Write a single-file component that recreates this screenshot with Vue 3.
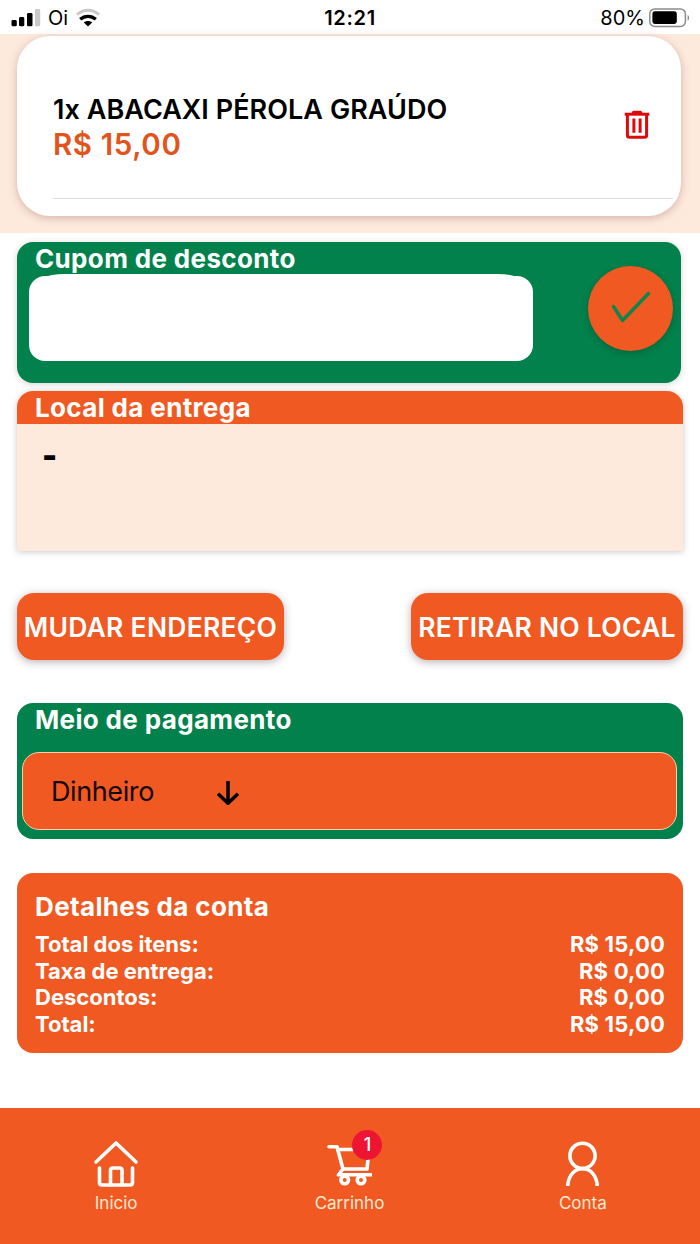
<template>
  <div class="app">
    <header class="status">
      <div class="status__side">
        <svg class="status__signal" viewBox="0 0 30 20" width="30" height="20">
          <rect x="0.5" y="12" width="5.3" height="6.3" rx="1.4" fill="#000" />
          <rect x="8" y="9" width="5.3" height="9.3" rx="1.4" fill="#000" />
          <rect x="16" y="5" width="5.5" height="13.3" rx="1.4" fill="#000" />
          <rect x="23.9" y="1" width="5.3" height="17.3" rx="1.4" fill="#c9c9c9" />
        </svg>
        <span class="status__carrier">Oi</span>
        <svg class="status__wifi" viewBox="0 0 26 20" width="26" height="20">
          <path d="M2 6.7C8.5 0.8 17.5 0.8 24 6.7" fill="none" stroke="#c9c9c9" stroke-width="3" />
          <path d="M5.2 11.3C9.7 7.4 16.3 7.4 20.8 11.3" fill="none" stroke="#000" stroke-width="3.4" />
          <path d="M13 18.4L8.8 14.6C11.2 12.6 14.8 12.6 17.2 14.6Z" fill="#000" />
        </svg>
      </div>
      <span class="status__time">12:21</span>
      <div class="status__side status__side--right">
        <span class="status__percent">80%</span>
        <svg viewBox="0 0 42 20" width="42" height="20">
          <rect x="0.8" y="0.9" width="35.6" height="17.6" rx="5" fill="#fff" stroke="#8c8c8c" stroke-width="1.5" />
          <rect x="3.4" y="3.3" width="24.4" height="12.6" rx="2.4" fill="#000" />
          <path d="M38.6 7c2 .6 2 5 0 5.6z" fill="#8c8c8c" />
        </svg>
      </div>
    </header>

    <section class="cart">
      <div class="cart__card">
        <div v-for="item in items" :key="item.name" class="cart__item">
          <div class="cart__info">
            <span class="cart__name">{{ item.qty }}x {{ item.name }}</span>
            <span class="cart__price">{{ money(item.price) }}</span>
          </div>
          <button class="cart__delete" title="Remover">
            <svg viewBox="0 0 26 30" width="26" height="30" fill="none" stroke="#dc0a0a">
              <path d="M0.7 4.2H25.3" stroke-width="3" />
              <path d="M8.5 3.6L9.5 1.9H16.5L17.5 3.6" stroke-width="2.4" />
              <path d="M3.4 4.5V25.2Q3.4 27.2 5.4 27.2H20.6Q22.6 27.2 22.6 25.2V4.5" stroke-width="3" />
              <path d="M9.9 8.500V22.800M16.100 8.500V22.800" stroke-width="3" />
            </svg>
          </button>
        </div>
      </div>
    </section>

    <section class="coupon">
      <div class="coupon__main">
        <h2 class="title">Cupom de desconto</h2>
        <div class="coupon__field">
          <input v-model="coupon" class="coupon__input" type="text" />
        </div>
      </div>
      <button class="coupon__apply" title="Aplicar">
        <svg viewBox="0 0 40 34" width="40" height="34">
          <path d="M2.5 16.5L11.5 30.5L37.5 3.5" fill="none" stroke="#14834a" stroke-width="3.5" stroke-linecap="round" stroke-linejoin="round" />
        </svg>
      </button>
    </section>

    <section class="address">
      <h2 class="title address__title">Local da entrega</h2>
      <div class="address__body">-</div>
    </section>

    <div class="actions">
      <button class="actions__btn">MUDAR ENDEREÇO</button>
      <button class="actions__btn actions__btn--pickup">RETIRAR NO LOCAL</button>
    </div>

    <section class="payment">
      <h2 class="title payment__title">Meio de pagamento</h2>
      <div class="payment__select">
        <span class="payment__value">Dinheiro</span>
        <svg viewBox="0 0 26 28" width="26" height="28">
          <path d="M13 4V26M3 16.8L13 26.3L23 16.8" fill="none" stroke="#000" stroke-width="3.5" />
        </svg>
      </div>
    </section>

    <section class="bill">
      <h2 class="title bill__title">Detalhes da conta</h2>
      <div v-for="row in bill" :key="row.label" class="bill__row">
        <span>{{ row.label }}</span>
        <span class="bill__value">{{ money(row.value) }}</span>
      </div>
    </section>

    <nav class="tabs">
      <a class="tabs__item">
        <svg class="tabs__icon" viewBox="0 0 46 48" width="46" height="48">
          <path d="M3 22L23 3L43 22" />
          <path d="M6.5 28V42.5Q6.5 45 9 45H37Q39.5 45 39.5 42.5V28" />
          <path d="M17.5 45V30.5Q17.5 28 20 28H26.5Q29 28 29 30.5V45" />
        </svg>
        <span class="tabs__label">Inicio</span>
      </a>
      <a class="tabs__item">
        <div class="tabs__cart">
          <svg class="tabs__icon" viewBox="0 0 46 48" width="46" height="48">
            <path d="M3 6.8H11L17 29H41L43 9.500H12" />
            <path d="M17 29L12.500 34.800H45" />
            <circle cx="18.700" cy="40" r="3.800" />
            <circle cx="35" cy="40" r="3.800" />
          </svg>
          <span class="tabs__badge">{{ items.length }}</span>
        </div>
        <span class="tabs__label">Carrinho</span>
      </a>
      <a class="tabs__item">
        <svg class="tabs__icon tabs__icon--user" viewBox="0 0 46 48" width="46" height="48">
          <circle cx="22.500" cy="15.800" r="12.600" />
          <path d="M7.700 46C8.300 36 14 28.800 22.500 28.800S36.700 36 37.300 46" />
        </svg>
        <span class="tabs__label">Conta</span>
      </a>
    </nav>
  </div>
</template>

<script setup>
import { ref } from 'vue'

const coupon = ref('')

const items = ref([{ qty: 1, name: 'ABACAXI PÉROLA GRAÚDO', price: 15 }])

const bill = [
  { label: 'Total dos itens:', value: 15 },
  { label: 'Taxa de entrega:', value: 0 },
  { label: 'Descontos:', value: 0 },
  { label: 'Total:', value: 15 },
]

function money(value) {
  return 'R$ ' + value.toFixed(2).replace('.', ',')
}
</script>

<style>
body {
  margin: 0;
  background: #fff;
}
</style>

<style scoped>
.app {
  display: flex;
  flex-direction: column;
  width: 700px;
  height: 1244px;
  overflow: hidden;
  background: #fff;
  font-family: Inter, "Liberation Sans", sans-serif;
}

.app * {
  box-sizing: border-box;
}

button {
  border: none;
  padding: 0;
  font-family: inherit;
}

.title {
  margin: 0;
  padding-left: 18px;
  color: #fff;
  font-size: 26px;
  font-weight: 700;
  letter-spacing: 0.35px;
  line-height: 33px;
  white-space: nowrap;
}

/* Status bar */
.status {
  display: grid;
  grid-template-columns: 1fr auto 1fr;
  align-items: center;
  height: 34px;
  flex-shrink: 0;
  padding: 2px 9px 0 11px;
  color: #000;
  font-size: 20px;
}

.status__side {
  display: flex;
  align-items: center;
}

.status__side--right {
  justify-content: flex-end;
  gap: 4px;
}

.status__carrier {
  margin-left: 7px;
}

.status__wifi {
  margin-left: 7px;
}

.status__time {
  font-weight: 600;
  letter-spacing: 0.7px;
  margin-right: 2px;
}

/* Cart */
.cart {
  height: 199px;
  flex-shrink: 0;
  padding: 2px 19px 17px 17px;
  background: #fdeadd;
}

.cart__card {
  height: 180px;
  padding: 0 8px 17px 36px;
  border-radius: 33px;
  background: #fff;
  box-shadow: 0 2px 8px rgba(120, 50, 40, 0.3);
}

.cart__item {
  display: flex;
  align-items: center;
  justify-content: space-between;
  height: 163px;
  border-bottom: 1px solid #dedede;
  padding: 15px 23px 0 0;
}

.cart__info {
  display: flex;
  flex-direction: column;
  padding-top: 6px;
}

.cart__name {
  color: #000;
  font-size: 27px;
  font-weight: 600;
  letter-spacing: 0.05px;
  line-height: 34px;
}

.cart__price {
  color: #e2541c;
  font-size: 29.5px;
  font-weight: 600;
  letter-spacing: 0.6px;
  line-height: 35px;
}

.cart__delete {
  display: flex;
  background: none;
}

/* Coupon */
.coupon {
  display: flex;
  justify-content: space-between;
  height: 141px;
  flex-shrink: 0;
  margin: 9px 19px 0 17px;
  padding-right: 8px;
  border-radius: 16px;
  background: #02814c;
  box-shadow: 0 1px 6px rgba(60, 40, 40, 0.22);
}

.coupon__field {
  width: 504px;
  margin-left: 12px;
}

/* raised strip along the top edge of the field */
.coupon__field::before {
  content: "";
  display: block;
  height: 8px;
  margin: -1px 18px -6px;
  border-radius: 18px 18px 0 0 / 3px 3px 0 0;
  background: #fff;
}

.coupon__input {
  display: block;
  width: 100%;
  height: 85px;
  border: none;
  border-radius: 16px;
  background: #fff;
  padding: 0 16px;
  font: 26px Inter, sans-serif;
  outline: none;
}

.coupon__apply {
  display: flex;
  align-items: center;
  justify-content: center;
  width: 85px;
  height: 85px;
  margin-top: 24px;
  padding-bottom: 4px;
  border-radius: 50%;
  background: #f05a22;
  box-shadow: 0 2px 6px rgba(0, 40, 10, 0.3);
}

/* Delivery address */
.address {
  height: 160px;
  flex-shrink: 0;
  margin: 8px 17px 0;
  border-radius: 16px 16px 0 0;
  background: #fdeadd;
  box-shadow: 0 1px 6px rgba(60, 40, 40, 0.25);
}

.address__title {
  border-radius: 16px 16px 0 0;
  background: #f05a22;
}

.address__body {
  padding: 15px 25px;
  color: #000;
  font-size: 32px;
  font-weight: 900;
  line-height: 34px;
}

.actions {
  display: flex;
  justify-content: space-between;
  flex-shrink: 0;
  margin: 42px 17px 0;
}

.actions__btn {
  width: 267px;
  height: 67px;
  border-radius: 17px;
  background: #f05a22;
  color: #fff;
  font-size: 26.5px;
  font-weight: 600;
  letter-spacing: 0.25px;
  white-space: nowrap;
  box-shadow: 0 2px 8px rgba(60, 30, 40, 0.35);
}

.actions__btn--pickup {
  width: 272px;
}

/* Payment */
.payment {
  height: 136px;
  flex-shrink: 0;
  margin: 43px 17px 0;
  padding: 0 6px 0 5px;
  border-radius: 16px;
  background: #02814c;
}

.payment__title {
  padding-left: 13px;
}

.payment__select {
  display: flex;
  align-items: center;
  gap: 61px;
  height: 78px;
  margin-top: 16px;
  padding-left: 28px;
  border: 1.5px solid #f6cda6;
  border-radius: 17px;
  background: #f05a22;
}

.payment__value {
  color: #140500;
  font-size: 27px;
  letter-spacing: -0.4px;
}

/* Bill */
.bill {
  height: 180px;
  flex-shrink: 0;
  margin: 34px 17px 0;
  padding: 17px 18px 0;
  border-radius: 16px;
  background: #f05a22;
  color: #fff;
}

.bill__title {
  padding: 0;
  margin-bottom: 8px;
}

.bill__row {
  display: flex;
  justify-content: space-between;
  font-size: 22px;
  font-weight: 700;
  line-height: 26.5px;
}

.bill__value {
  letter-spacing: 0.2px;
}

/* Bottom tabs */
.tabs {
  display: grid;
  grid-template-columns: repeat(3, 1fr);
  height: 136px;
  flex-shrink: 0;
  margin-top: auto;
  background: #f05a22;
}

.tabs__item {
  display: flex;
  flex-direction: column;
  align-items: center;
  padding: 32px 1px 0 0;
}

.tabs__icon {
  display: block;
  fill: none;
  stroke: #fff;
  stroke-width: 3.6;
  stroke-linecap: round;
  stroke-linejoin: round;
}

.tabs__icon--user {
  stroke-linecap: butt;
}

.tabs__cart {
  position: relative;
}

.tabs__badge {
  position: absolute;
  top: -10px;
  right: -10px;
  width: 30px;
  height: 30px;
  border-radius: 50%;
  background: #ed1532;
  color: #fff;
  font-size: 18px;
  font-weight: 500;
  line-height: 30px;
  text-align: center;
}

.tabs__label {
  margin-top: 4px;
  color: #ffe9d0;
  font-size: 17px;
  line-height: 22px;
}
</style>
